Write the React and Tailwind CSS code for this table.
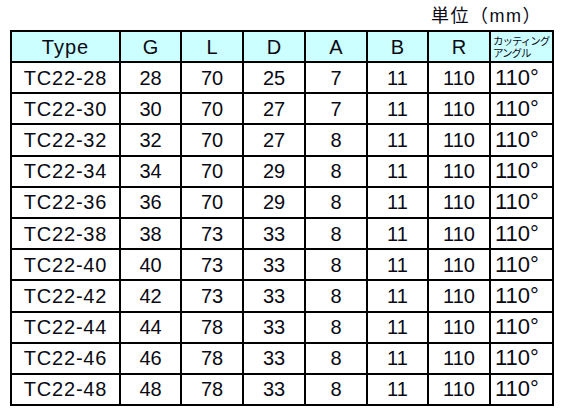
import React from 'react'

const rows = [
  ['TC22-28', 28, 70, 25, 7],
  ['TC22-30', 30, 70, 27, 7],
  ['TC22-32', 32, 70, 27, 8],
  ['TC22-34', 34, 70, 29, 8],
  ['TC22-36', 36, 70, 29, 8],
  ['TC22-38', 38, 73, 33, 8],
  ['TC22-40', 40, 73, 33, 8],
  ['TC22-42', 42, 73, 33, 8],
  ['TC22-44', 44, 78, 33, 8],
  ['TC22-46', 46, 78, 33, 8],
  ['TC22-48', 48, 78, 33, 8],
]

const widths = [109, 61, 62, 62, 62, 61, 62, 63]

const App = () => {
  const cell = 'border-2 border-black text-center p-0 leading-none'
  return (
    <div
      className="w-[564px] h-[417px] bg-white text-[#0a0a14] pl-[10px]"
      style={{ fontFamily: '"Liberation Sans", "Noto Sans CJK JP", sans-serif' }}
    >
      <div className="h-[30px] flex items-center justify-end pr-[22px] pt-[2px] text-[18px] tracking-[1.5px]">
        単位（mm）
      </div>
      <table className="border-collapse table-fixed w-[543px] text-[20px]">
        <colgroup>
          {widths.map((w, i) => (
            <col key={i} style={{ width: w }} />
          ))}
        </colgroup>
        <thead>
          <tr className="h-[31px] bg-[#ccffff]">
            <th className={`${cell} font-normal tracking-[1px]`}>Type</th>
            <th className={`${cell} font-normal`}>G</th>
            <th className={`${cell} font-normal`}>L</th>
            <th className={`${cell} font-normal`}>D</th>
            <th className={`${cell} font-normal`}>A</th>
            <th className={`${cell} font-normal`}>B</th>
            <th className={`${cell} font-normal`}>R</th>
            <th className="border-2 border-black p-0 pl-[2px] text-left font-normal text-[10.5px] leading-[12px] tracking-[-1px] whitespace-nowrap overflow-hidden">
              <div>カッティング</div>
              <div>アングル</div>
            </th>
          </tr>
        </thead>
        <tbody>
          {rows.map((r, i) => (
            <tr key={i} className="h-[31.2px]">
              <td className={`${cell} tracking-[0.8px]`}>{r[0]}</td>
              <td className={cell}>{r[1]}</td>
              <td className={cell}>{r[2]}</td>
              <td className={cell}>{r[3]}</td>
              <td className={cell}>{r[4]}</td>
              <td className={cell}>11</td>
              <td className={cell}>110</td>
              <td className="border-2 border-black p-0 pl-[4px] text-left leading-none text-[22px]">
                110°
              </td>
            </tr>
          ))}
        </tbody>
      </table>
    </div>
  )
}

export default App
